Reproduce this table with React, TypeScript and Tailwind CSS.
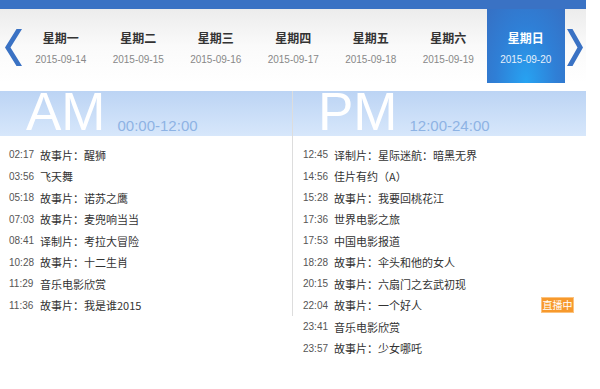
import React from "react";

const days = [
  { name: "星期一", date: "2015-09-14" },
  { name: "星期二", date: "2015-09-15" },
  { name: "星期三", date: "2015-09-16" },
  { name: "星期四", date: "2015-09-17" },
  { name: "星期五", date: "2015-09-18" },
  { name: "星期六", date: "2015-09-19" },
  { name: "星期日", date: "2015-09-20", active: true },
];

const amList = [
  ["02:17", "故事片：醒狮"],
  ["03:56", "飞天舞"],
  ["05:18", "故事片：诺苏之鹰"],
  ["07:03", "故事片：麦兜响当当"],
  ["08:41", "译制片：考拉大冒险"],
  ["10:28", "故事片：十二生肖"],
  ["11:29", "音乐电影欣赏"],
  ["11:36", "故事片：我是谁2015"],
];

const pmList = [
  ["12:45", "译制片：星际迷航：暗黑无界"],
  ["14:56", "佳片有约（A）"],
  ["15:28", "故事片：我要回桃花江"],
  ["17:36", "世界电影之旅"],
  ["17:53", "中国电影报道"],
  ["18:28", "故事片：伞头和他的女人"],
  ["20:15", "故事片：六扇门之玄武初现"],
  ["22:04", "故事片：一个好人", true],
  ["23:41", "音乐电影欣赏"],
  ["23:57", "故事片：少女哪吒"],
];

const cjk = "font-['Noto_Sans_CJK_SC',sans-serif]";

function Chevron({ dir }: { dir: "left" | "right" }) {
  const pts =
    dir === "left"
      ? "11.5,0 17,0 5.5,18.5 17,37 11.5,37 0,18.5"
      : "0,0 5.5,0 16,18.5 5.5,37 0,37 10.5,18.5";
  return (
    <svg width="17" height="37" viewBox="0 0 17 37">
      <polygon points={pts} fill="#3a72c4" />
    </svg>
  );
}

function Row({ time, title, live }: { time: string; title: string; live?: boolean }) {
  return (
    <div className="flex h-[21.5px] items-center pr-3">
      <span className="w-[31px] font-['Liberation_Sans',sans-serif] text-[10px] text-[#555]">
        {time}
      </span>
      <span className={`${cjk} text-[11px] text-[#333]`}>{title}</span>
      {live && (
        <span
          className={`${cjk} ml-auto flex h-4 w-[33px] items-center justify-center border border-[#fcc37f] bg-[#f7992c] text-[10px] leading-none text-white`}
        >
          直播中
        </span>
      )}
    </div>
  );
}

function Band({ big, range, pad }: { big: string; range: string; pad: string }) {
  return (
    <div
      className={`flex h-[45px] items-start gap-3 bg-gradient-to-b from-[#bcd4f4] to-[#d7e7fb] ${pad}`}
    >
      <span className="font-['Liberation_Sans',sans-serif] text-[53px] leading-[41px] text-white">
        {big}
      </span>
      <span className="mt-[27px] font-['Liberation_Sans',sans-serif] text-[15px] leading-none text-[#8eb3e4]">
        {range}
      </span>
    </div>
  );
}

export default function App() {
  return (
    <div className="h-[389px] w-[600px] bg-white">
      <div className="w-[586px]">
        <div className="h-[9px] bg-[#3a72c4]" />
        <div className="flex h-[74px] bg-gradient-to-b from-[#ececec] via-[#fafafa] to-white">
          <div className="flex w-[22px] items-center pl-[5px] pt-[3px]">
            <Chevron dir="left" />
          </div>
          {days.map((d) => (
            <div
              key={d.name}
              className={`flex w-[77.5px] flex-col items-center ${
                d.active
                  ? "bg-[radial-gradient(ellipse_at_50%_100%,#27a3f2_0%,#2f7fd6_55%,#3670c4_100%)]"
                  : ""
              }`}
            >
              <span
                className={`${cjk} mt-[21px] text-[12px] font-bold leading-4 ${
                  d.active ? "text-white" : "text-[#333]"
                }`}
              >
                {d.name}
              </span>
              <span
                className={`mt-[6px] font-['Liberation_Sans',sans-serif] text-[10px] leading-4 ${
                  d.active ? "text-[#e6f0fb]" : "text-[#888]"
                }`}
              >
                {d.date}
              </span>
            </div>
          ))}
          <div className="flex flex-1 items-center pl-[2px] pt-[3px]">
            <Chevron dir="right" />
          </div>
        </div>
        <div className="h-2" />
        <div className="flex items-start">
          <div className="w-[293px] border-r border-[#dddddd]">
            <Band big="AM" range="00:00-12:00" pad="pl-[26px]" />
            <div className="pl-[9px] pt-2">
              {amList.map(([t, n]) => (
                <Row key={t} time={t} title={n} />
              ))}
            </div>
          </div>
          <div className="flex-1">
            <Band big="PM" range="12:00-24:00" pad="pl-[25px]" />
            <div className="pl-[10px] pt-2">
              {pmList.map(([t, n, live]) => (
                <Row key={t as string} time={t as string} title={n as string} live={!!live} />
              ))}
            </div>
          </div>
        </div>
      </div>
    </div>
  );
}
